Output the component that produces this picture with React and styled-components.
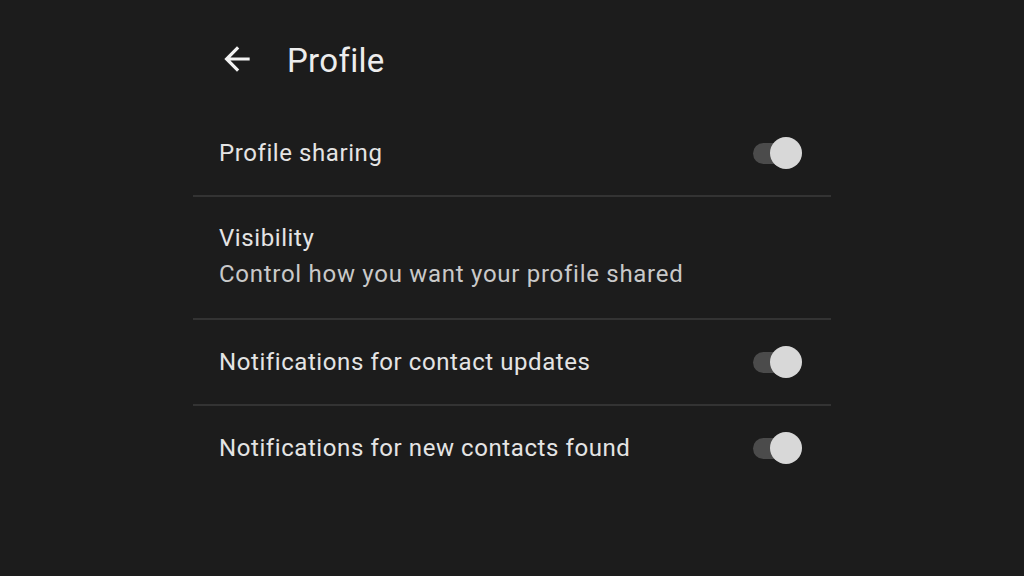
import React from "react";
import styled, { createGlobalStyle } from "styled-components";

const Global = createGlobalStyle`
  html, body { margin: 0; padding: 0; background: #1c1c1c; }
  body { font-family: Roboto, "Noto Sans", "Liberation Sans", sans-serif; }
`;

const Page = styled.div`
  width: 1024px;
  height: 576px;
  background: #1c1c1c;
  display: flex;
  justify-content: flex-start;
  padding-left: 193px;
  padding-top: 20px;
  box-sizing: border-box;
`;

const Panel = styled.div`
  width: 638px;
  display: flex;
  flex-direction: column;
`;

const Header = styled.header`
  height: 80px;
  margin-bottom: 10px;
  display: flex;
  align-items: center;
  padding-left: 25px;
`;

const BackButton = styled.button`
  width: 38px;
  height: 38px;
  flex-shrink: 0;
  border: none;
  background: none;
  padding: 0;
  display: flex;
  align-items: center;
  justify-content: center;
  color: #f2f2f2;
  margin-right: 31px;
  margin-top: -2px;

  svg { flex-shrink: 0; display: block; }
`;

const Title = styled.h1`
  margin: 0;
  font-size: 33px;
  font-weight: 400;
  color: #ededed;
  letter-spacing: 0.3px;
`;

const Row = styled.div`
  height: ${(p) => p.$h}px;
  display: flex;
  align-items: center;
  justify-content: space-between;
  padding: 0 29px 0 26px;
  border-bottom: ${(p) => (p.$last ? "none" : "2px solid #333333")};
  box-sizing: border-box;
`;

const TextBlock = styled.div`
  display: flex;
  flex-direction: column;
  gap: 8px;
  margin-top: ${(p) => p.$offset || 0}px;
`;

const Label = styled.span`
  font-size: 24px;
  line-height: 28px;
  color: #e4e4e4;
  letter-spacing: 0.58px;
`;

const Sub = styled.span`
  font-size: 24px;
  line-height: 28px;
  color: #c9c9c9;
  letter-spacing: 0.72px;
`;

const Toggle = styled.div`
  position: relative;
  width: 49px;
  height: 32px;
  flex-shrink: 0;
  margin-top: ${(p) => p.$offset || 0}px;
`;

const Track = styled.div`
  position: absolute;
  left: 0;
  top: 6px;
  width: 40px;
  height: 21px;
  border-radius: 11px;
  background: #4b4b4b;
`;

const Thumb = styled.div`
  position: absolute;
  right: 0;
  top: 0;
  width: 32px;
  height: 32px;
  border-radius: 50%;
  background: #d8d8d8;
`;

const Switch = ({ offset }) => (
  <Toggle $offset={offset}>
    <Track />
    <Thumb />
  </Toggle>
);

export default function App() {
  return (
    <>
      <Global />
      <Page>
        <Panel>
          <Header>
            <BackButton aria-label="Back">
              <svg width="38" height="38" viewBox="0 0 24 24" fill="currentColor">
                <path d="M20 11H7.83l5.59-5.59L12 4l-8 8 8 8 1.41-1.41L7.83 13H20v-2z" />
              </svg>
            </BackButton>
            <Title>Profile</Title>
          </Header>
          <Row $h={87}>
            <TextBlock>
              <Label>Profile sharing</Label>
            </TextBlock>
            <Switch />
          </Row>
          <Row $h={123}>
            <TextBlock $offset={-4}>
              <Label>Visibility</Label>
              <Sub>Control how you want your profile shared</Sub>
            </TextBlock>
          </Row>
          <Row $h={86}>
            <TextBlock $offset={-1}>
              <Label>Notifications for contact updates</Label>
            </TextBlock>
            <Switch offset={-1} />
          </Row>
          <Row $h={86} $last>
            <TextBlock $offset={-3}>
              <Label>Notifications for new contacts found</Label>
            </TextBlock>
            <Switch offset={-3} />
          </Row>
        </Panel>
      </Page>
    </>
  );
}
